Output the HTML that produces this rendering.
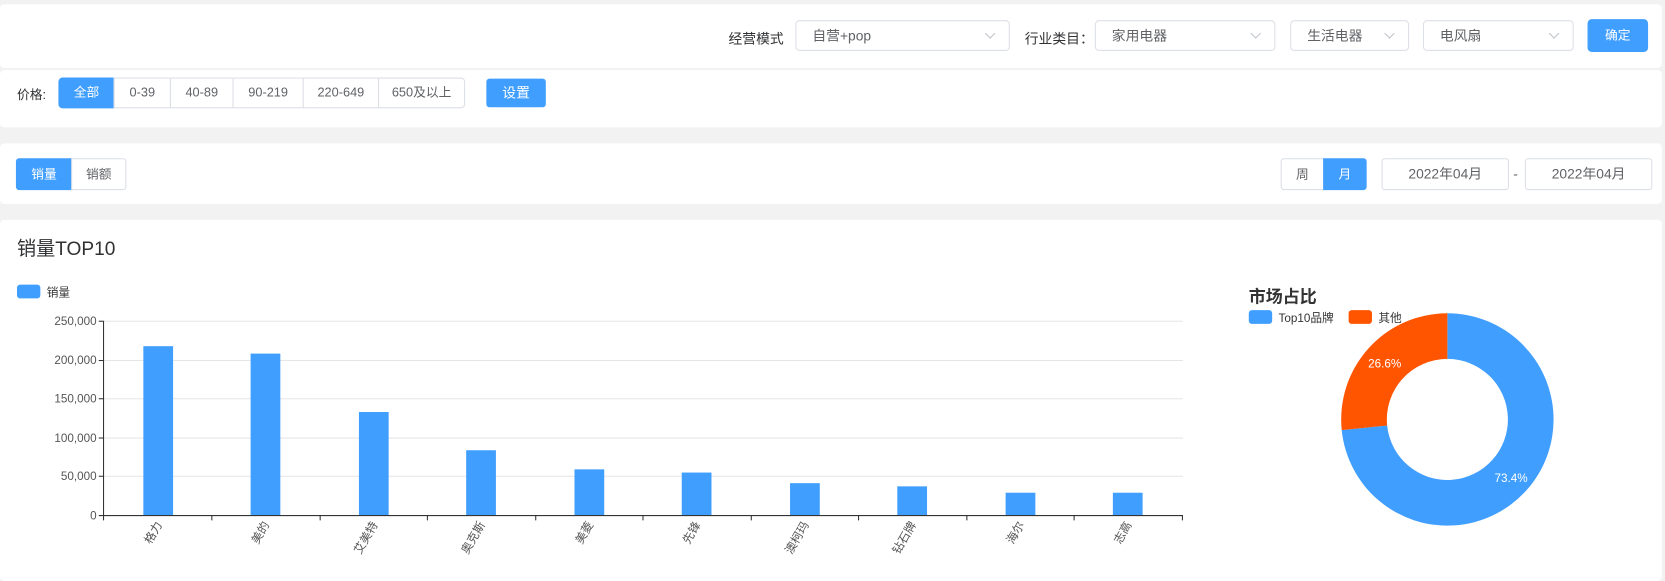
<!DOCTYPE html>
<html><head><meta charset="utf-8"><style>
html,body{margin:0;padding:0;background:#f2f2f2;overflow:hidden;width:1665px;height:569px}
#w{position:absolute;left:0;top:0;width:1568px;height:536px;transform:scale(1.0619);transform-origin:0 0;font-family:"Liberation Sans","Noto Sans CJK SC",sans-serif;color:#606266;font-size:13px}
.a{position:absolute}
.card{position:absolute;background:#fff;border-radius:4px}
.sel{position:absolute;height:29px;border:1px solid #dcdfe6;border-radius:4px;box-sizing:border-box;background:#fff;line-height:27px;padding-left:15px;color:#606266;font-size:13px}
.sel:after{content:"";position:absolute;right:14px;top:8px;width:6px;height:6px;border-right:1px solid #c0c4cc;border-bottom:1px solid #c0c4cc;transform:rotate(45deg)}
.btn{position:absolute;box-sizing:border-box;text-align:center;font-size:12px;border:1px solid #dcdfe6;background:#fff;color:#606266}
.pri{background:#409eff;border-color:#409eff;color:#fff}
</style></head><body><div id="w">
<div class="card" style="left:0;top:4px;width:1565px;height:60px"></div>
<div class="card" style="left:0;top:66px;width:1565px;height:54px"></div>
<div class="card" style="left:0;top:135px;width:1565px;height:57px"></div>
<div class="card" style="left:0;top:207px;width:1565px;height:340px"></div>

<div class="a" style="left:686px;top:26px;color:#303133">经营模式</div>
<div class="sel" style="left:749px;top:19px;width:202px">自营+pop</div>
<div class="a" style="left:965px;top:26px;color:#303133">行业类目：</div>
<div class="sel" style="left:1031px;top:19px;width:170px">家用电器</div>
<div class="sel" style="left:1215px;top:19px;width:112px">生活电器</div>
<div class="sel" style="left:1340px;top:19px;width:142px">电风扇</div>
<div class="btn pri" style="left:1495px;top:18px;width:57px;height:31px;line-height:29px;border-radius:4px">确定</div>

<div class="a" style="left:16px;top:80px;font-size:12px;color:#303133">价格:</div>
<div class="btn pri" style="left:55px;top:73px;width:53px;height:29px;line-height:27px;border-radius:4px 0 0 4px">全部</div>
<div class="btn" style="left:107px;top:73px;width:54px;height:29px;line-height:27px">0-39</div>
<div class="btn" style="left:160px;top:73px;width:60px;height:29px;line-height:27px">40-89</div>
<div class="btn" style="left:219px;top:73px;width:67px;height:29px;line-height:27px">90-219</div>
<div class="btn" style="left:285px;top:73px;width:72px;height:29px;line-height:27px">220-649</div>
<div class="btn" style="left:356px;top:73px;width:82px;height:29px;line-height:27px;border-radius:0 4px 4px 0">650及以上</div>
<div class="btn pri" style="left:458px;top:74px;width:56px;height:27px;line-height:25px;border-radius:3px;font-size:13px">设置</div>

<div class="btn pri" style="left:15px;top:149px;width:53px;height:30px;line-height:28px;border-radius:3px 0 0 3px">销量</div>
<div class="btn" style="left:67px;top:149px;width:52px;height:30px;line-height:28px;border-radius:0 3px 3px 0">销额</div>
<div class="btn" style="left:1206px;top:149px;width:41px;height:30px;line-height:28px;border-radius:3px 0 0 3px">周</div>
<div class="btn pri" style="left:1246px;top:149px;width:41px;height:30px;line-height:28px;border-radius:0 3px 3px 0">月</div>
<div class="btn" style="left:1301px;top:149px;width:120px;height:30px;line-height:28px;border-radius:3px;font-size:13px">2022年04月</div>
<div class="a" style="left:1425px;top:156px">-</div>
<div class="btn" style="left:1436px;top:149px;width:120px;height:30px;line-height:28px;border-radius:3px;font-size:13px">2022年04月</div>

<div class="a" style="left:16px;top:220px;font-size:18px;color:#303133">销量TOP10</div>

<svg class="a" style="left:0;top:0" width="1568" height="536" font-family="Liberation Sans, Noto Sans CJK SC, sans-serif">
<rect x="16" y="268" width="22" height="13" rx="3" fill="#409eff"/>
<text x="44" y="279" font-size="11" fill="#333">销量</text>
<g stroke="#e6e6e6" stroke-width="1">
<line x1="97" y1="302.5" x2="1114" y2="302.5"/><line x1="97" y1="339.5" x2="1114" y2="339.5"/><line x1="97" y1="375.5" x2="1114" y2="375.5"/><line x1="97" y1="412.5" x2="1114" y2="412.5"/><line x1="97" y1="448.5" x2="1114" y2="448.5"/></g>
<g font-size="11" fill="#555" text-anchor="end">
<text x="91" y="306">250,000</text><text x="91" y="343">200,000</text><text x="91" y="379">150,000</text><text x="91" y="416">100,000</text><text x="91" y="452">50,000</text><text x="91" y="489">0</text></g>
<g fill="#409eff">
<rect x="135" y="326" width="28" height="159"/><rect x="236" y="333" width="28" height="152"/><rect x="338" y="388" width="28" height="97"/><rect x="439" y="424" width="28" height="61"/><rect x="541" y="442" width="28" height="43"/><rect x="642" y="445" width="28" height="40"/><rect x="744" y="455" width="28" height="30"/><rect x="845" y="458" width="28" height="27"/><rect x="947" y="464" width="28" height="21"/><rect x="1048" y="464" width="28" height="21"/></g>
<g stroke="#333" stroke-width="1">
<line x1="97.5" y1="302" x2="97.5" y2="490"/><line x1="93" y1="302.5" x2="97" y2="302.5"/><line x1="93" y1="339.5" x2="97" y2="339.5"/><line x1="93" y1="375.5" x2="97" y2="375.5"/><line x1="93" y1="412.5" x2="97" y2="412.5"/><line x1="93" y1="448.5" x2="97" y2="448.5"/><line x1="93" y1="485.5" x2="97" y2="485.5"/>
<line x1="97" y1="485.5" x2="1114" y2="485.5"/>
<line x1="199.5" y1="485" x2="199.5" y2="490"/><line x1="301.5" y1="485" x2="301.5" y2="490"/><line x1="402.5" y1="485" x2="402.5" y2="490"/><line x1="504.5" y1="485" x2="504.5" y2="490"/><line x1="605.5" y1="485" x2="605.5" y2="490"/><line x1="707.5" y1="485" x2="707.5" y2="490"/><line x1="808.5" y1="485" x2="808.5" y2="490"/><line x1="910.5" y1="485" x2="910.5" y2="490"/><line x1="1011.5" y1="485" x2="1011.5" y2="490"/><line x1="1113.5" y1="485" x2="1113.5" y2="490"/></g>
<g font-size="11" fill="#555" text-anchor="end">
<text transform="translate(153,494) rotate(-60)">格力</text>
<text transform="translate(254,494) rotate(-60)">美的</text>
<text transform="translate(356,494) rotate(-60)">艾美特</text>
<text transform="translate(457,494) rotate(-60)">奥克斯</text>
<text transform="translate(559,494) rotate(-60)">美菱</text>
<text transform="translate(660,494) rotate(-60)">先锋</text>
<text transform="translate(762,494) rotate(-60)">澳柯玛</text>
<text transform="translate(863,494) rotate(-60)">钻石牌</text>
<text transform="translate(965,494) rotate(-60)">海尔</text>
<text transform="translate(1066,494) rotate(-60)">志高</text></g>

<text x="1176" y="285" font-size="16" font-weight="bold" fill="#333">市场占比</text>
<rect x="1176" y="292" width="22" height="13" rx="3" fill="#409eff"/>
<text x="1204" y="303" font-size="11" fill="#333">Top10品牌</text>
<rect x="1270" y="292" width="22" height="13" rx="3" fill="#ff5500"/>
<text x="1298" y="303" font-size="11" fill="#333">其他</text>
<path d="M1363 295 A100 100 0 1 1 1263.5 405 L1306.3 400.7 A57 57 0 1 0 1363 338 Z" fill="#409eff"/>
<path d="M1263.5 405 A100 100 0 0 1 1363 295 L1363 338 A57 57 0 0 0 1306.3 400.7 Z" fill="#ff5500"/>
<text x="1304" y="346" font-size="11" fill="#fff" text-anchor="middle">26.6%</text>
<text x="1423" y="454" font-size="11" fill="#fff" text-anchor="middle">73.4%</text>
</svg>
</div></body></html>
